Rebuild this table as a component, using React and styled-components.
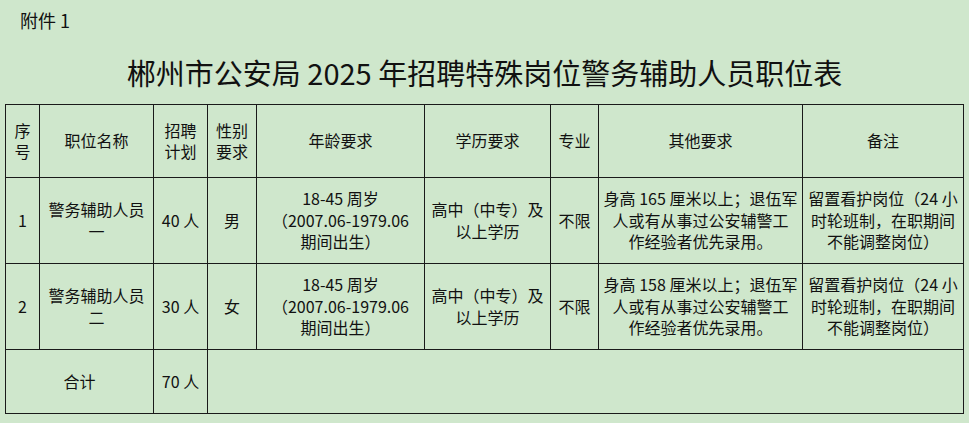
import styled, { createGlobalStyle } from "styled-components";

const GlobalStyle = createGlobalStyle`
  html, body {
    margin: 0;
    padding: 0;
    background: #cfe7cc;
  }
  body {
    font-family: "Noto Sans CJK SC", "Noto Sans", sans-serif;
    color: #111;
  }
`;

const header = [
  ["序", "号"],
  ["职位名称"],
  ["招聘", "计划"],
  ["性别", "要求"],
  ["年龄要求"],
  ["学历要求"],
  ["专业"],
  ["其他要求"],
  ["备注"],
];

const rows = [
  {
    id: 1,
    cells: [
      ["1"],
      ["警务辅助人员", "一"],
      ["40 人"],
      ["男"],
      ["18-45 周岁", "（2007.06-1979.06", "期间出生）"],
      ["高中（中专）及", "以上学历"],
      ["不限"],
      ["身高 165 厘米以上；退伍军", "人或有从事过公安辅警工", "作经验者优先录用。"],
      ["留置看护岗位（24 小", "时轮班制，在职期间", "不能调整岗位）"],
    ],
  },
  {
    id: 2,
    cells: [
      ["2"],
      ["警务辅助人员", "二"],
      ["30 人"],
      ["女"],
      ["18-45 周岁", "（2007.06-1979.06", "期间出生）"],
      ["高中（中专）及", "以上学历"],
      ["不限"],
      ["身高 158 厘米以上；退伍军", "人或有从事过公安辅警工", "作经验者优先录用。"],
      ["留置看护岗位（24 小", "时轮班制，在职期间", "不能调整岗位）"],
    ],
  },
];

function Lines({ lines }) {
  return lines.map((l, i) => <Line key={i}>{l}</Line>);
}

export default function App() {
  return (
    <Page>
      <GlobalStyle />
      <Attachment>附件 1</Attachment>
      <Title>郴州市公安局 2025 年招聘特殊岗位警务辅助人员职位表</Title>
      <Grid>
        {header.map((h, i) => (
          <Cell key={"h" + i}>
            <Lines lines={h} />
          </Cell>
        ))}
        {rows.map(r =>
          r.cells.map((c, i) => (
            <Cell key={r.id + "-" + i}>
              <Lines lines={c} />
            </Cell>
          ))
        )}
        <Cell $span={2}>
          <Line>合计</Line>
        </Cell>
        <Cell>
          <Line>70 人</Line>
        </Cell>
        <Cell $span={6} />
      </Grid>
    </Page>
  );
}

const Page = styled.div`
  width: 969px;
  height: 423px;
  overflow: hidden;
  padding-top: 9px;
  box-sizing: border-box;
`;

const Attachment = styled.div`
  padding-left: 20px;
  font-size: 18px;
  line-height: 22px;
  height: 22px;
`;

const Title = styled.h1`
  margin: 0;
  padding-top: 26px;
  height: 73px;
  box-sizing: border-box;
  text-align: center;
  font-size: 29px;
  line-height: 30px;
  font-weight: 400;
  color: #111;
`;

const Grid = styled.div`
  margin-left: 5px;
  width: fit-content;
  display: grid;
  grid-template-columns: 34px 114px 54px 49px 168px 126px 48px 204px 161px;
  grid-template-rows: 73px 86px 86px 64px;
  border-top: 1.5px solid #1a1a1a;
  border-left: 1.5px solid #1a1a1a;
  font-size: 16px;
`;

const Cell = styled.div`
  grid-column: span ${p => p.$span || 1};
  box-sizing: border-box;
  border-right: 1.5px solid #1a1a1a;
  border-bottom: 1.5px solid #1a1a1a;
  display: flex;
  flex-direction: column;
  align-items: center;
  justify-content: center;
  text-align: center;
  white-space: nowrap;
  overflow: hidden;
`;

const Line = styled.div`
  height: 21.5px;
  line-height: 21.5px;
`;
